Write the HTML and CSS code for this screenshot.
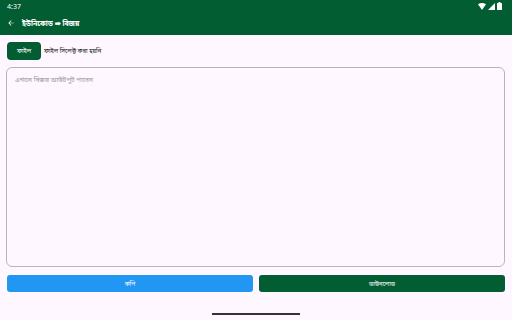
FILE: index.html
```html
<!DOCTYPE html>
<html lang="bn">
<head>
  <meta charset="UTF-8">
  <meta name="viewport" content="width=device-width, initial-scale=1.0">
  <title>ইউনিকোড ➡ বিজয়</title>
  <link rel="stylesheet" href="styles.css">
</head>
<body>
  <div class="screen">
    <div class="topbar">
      <div class="status">
        <span class="time">4:37</span>
        <span class="status-icons">
          <svg width="8" height="7" viewBox="0 0 8 7"><path d="M0 1.2 Q4 -1 8 1.2 L4 7 Z" fill="#fff"/></svg>
          <svg width="7" height="7" viewBox="0 0 7 7"><path d="M7 0 L7 7 L0 7 Z" fill="#fff"/></svg>
          <svg width="5" height="8" viewBox="0 0 5 8"><rect x="1.5" y="0" width="2" height="1" fill="#fff"/><rect x="0" y="1" width="5" height="7" rx="0.6" fill="#fff"/></svg>
        </span>
      </div>
      <div class="appbar">
        <svg class="back" width="8" height="8" viewBox="0 0 24 24"><path d="M20 11H7.83l5.59-5.59L12 4l-8 8 8 8 1.41-1.41L7.83 13H20v-2z" fill="#fff"/></svg>
        <span class="title">ইউনিকোড ➡ বিজয়</span>
      </div>
    </div>

    <div class="content">
      <div class="file-row">
        <button class="file-btn">ফাইল</button>
        <span class="file-name">ফাইল সিলেক্ট করা হয়নি</span>
      </div>
      <div class="output">
        <span class="placeholder">এখানে বিজয় আউটপুট পাবেন</span>
      </div>
      <div class="actions">
        <button class="btn copy">কপি</button>
        <button class="btn download">ডাউনলোড</button>
      </div>
    </div>

    <div class="nav">
      <div class="handle"></div>
    </div>
  </div>
</body>
</html>
```

FILE: styles.css
```css
body {
  margin: 0;
  font-family: "Noto Sans", "Noto Sans Bengali", Roboto, sans-serif;
  background: #fef7ff;
}
.screen {
  width: 512px;
  height: 320px;
  display: flex;
  flex-direction: column;
  overflow: hidden;
}
.topbar {
  background: #035d33;
  color: white;
  height: 35px;
}
.status {
  height: 12px;
  display: flex;
  justify-content: space-between;
  align-items: center;
  padding: 0 10px 0 7px;
  font-size: 7px;
}
.status-icons {
  display: flex;
  gap: 2px;
  align-items: center;
}
.appbar {
  height: 22px;
  display: flex;
  align-items: center;
  padding-left: 7px;
}
.back {
  margin-right: 7px;
}
.title {
  font-size: 7px;
  font-weight: bold;
  line-height: 1;
}
.content {
  flex: 1;
  display: flex;
  flex-direction: column;
  padding: 7px 7px 0 6px;
}
.file-row {
  display: flex;
  align-items: center;
  gap: 3px;
  padding-left: 1px;
}
.file-btn {
  background: #035d33;
  color: white;
  border: none;
  border-radius: 4px;
  width: 34px;
  height: 18px;
  font-family: inherit;
  font-size: 6px;
  padding: 0;
}
.file-name {
  font-size: 6px;
  color: #222;
}
.output {
  margin-top: 7px;
  height: 200px;
  border: 1px solid #b9b4bb;
  border-radius: 6px;
  padding: 0 8px;
  box-sizing: border-box;
  line-height: 1;
}
.placeholder {
  font-size: 6.5px;
  color: #9a959c;
}
.actions {
  display: flex;
  gap: 6px;
  margin-top: 8px;
  padding-left: 1px;
}
.btn {
  flex: 1;
  height: 17px;
  border: none;
  border-radius: 3px;
  color: white;
  font-family: inherit;
  font-size: 6px;
  padding: 0;
}
.copy {
  background: #2196f3;
}
.download {
  background: #035d33;
}
.nav {
  height: 26px;
  display: flex;
  justify-content: center;
  align-items: center;
}
.handle {
  width: 88px;
  height: 1.5px;
  background: #333;
  margin-top: 14px;
}
```
